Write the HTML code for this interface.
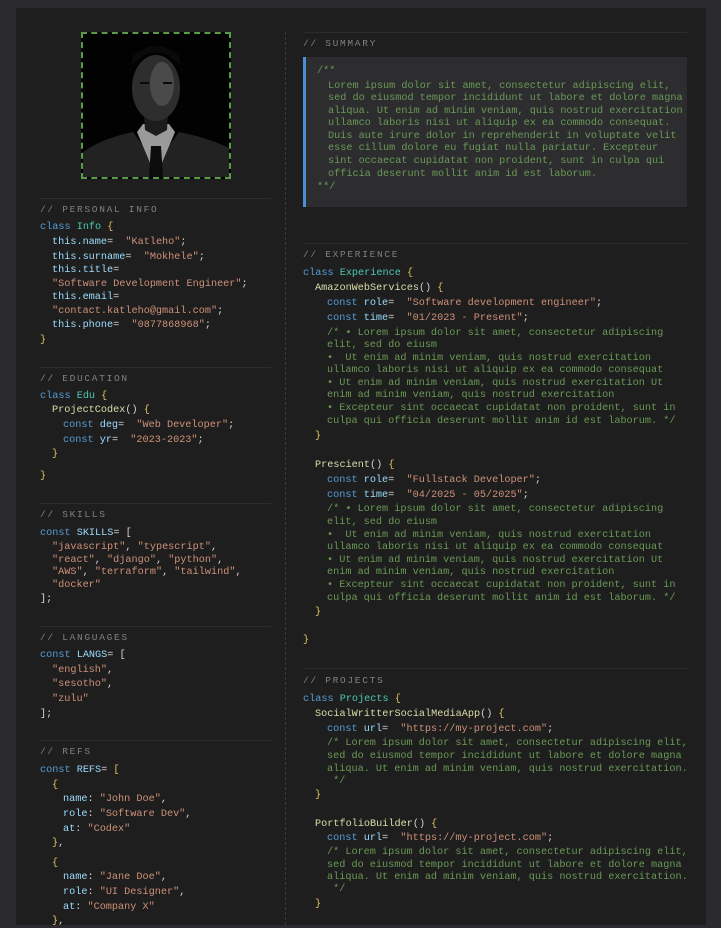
<!DOCTYPE html>
<html><head><meta charset="utf-8"><style>
html,body{margin:0;padding:0;}
body{width:721px;height:925px;background:#2b2b2f;position:relative;overflow:hidden;font-family:"Liberation Mono","Courier New",monospace;font-size:10.2px;}
.panel{position:absolute;left:16px;top:8px;width:690px;height:917px;background:#1e1e1e;}
.l{position:absolute;white-space:pre;line-height:12px;height:12px;color:#d4d4d4;}
.h{position:absolute;white-space:pre;line-height:12px;color:#808080;font-size:9.5px;letter-spacing:1.7px;}
.hr{position:absolute;height:1px;background:#2c2c2c;}
.k{color:#569cd6}.c{color:#4ec9b0}.p{color:#9cdcfe}.s{color:#ce9178}.g{color:#6a9955}.f{color:#dcdcaa}.b{color:#e0c060}.w{color:#d4d4d4}
</style></head><body>
<div class="panel"></div>
<div style="position:absolute;left:285px;top:32px;width:0;height:893px;border-left:1px dashed #3a3a3a;"></div>

<div style="position:absolute;left:81px;top:32px;width:146px;height:143px;border:2px dashed #5a9a48;background:#000;overflow:hidden;">
<svg width="146" height="143" viewBox="0 0 146 143">
<rect width="146" height="143" fill="#020202"/>
<path d="M0 143 L0 118 Q20 104 50 98 L73 130 L96 98 Q126 104 146 114 L146 143Z" fill="#222"/>
<path d="M54 98 L73 143 L92 98 L86 90 L60 90Z" fill="#9a9a9a"/>
<path d="M68 112 L78 112 L80 143 L66 143Z" fill="#0c0c0c"/>
<path d="M60 62 L86 62 L84 96 L73 102 L62 96Z" fill="#1c1c1c"/>
<ellipse cx="73" cy="54" rx="24" ry="33" fill="#2e2e2e"/>
<ellipse cx="79" cy="50" rx="12" ry="22" fill="#4a4a4a"/>
<path d="M48 32 Q73 5 98 32 L96 22 Q73 2 50 22Z" fill="#0a0a0a"/>
<rect x="57" y="48" width="9" height="2" fill="#0a0a0a"/><rect x="80" y="48" width="9" height="2" fill="#0a0a0a"/>
</svg></div>

<div class="hr" style="left:40px;top:198px;width:231px"></div>
<div class="h" style="left:40px;top:204px">// PERSONAL INFO</div>
<div class="l" style="left:40px;top:222px"><span class="k">class</span> <span class="c">Info</span> <span class="b">{</span></div>
<div class="l" style="left:52px;top:237px"><span class="p">this.name</span>=  <span class="s">"Katleho"</span>;</div>
<div class="l" style="left:52px;top:252px"><span class="p">this.surname</span>=  <span class="s">"Mokhele"</span>;</div>
<div class="l" style="left:52px;top:265px"><span class="p">this.title</span>=</div>
<div class="l" style="left:52px;top:279px"><span class="s">"Software Development Engineer"</span>;</div>
<div class="l" style="left:52px;top:292px"><span class="p">this.email</span>=</div>
<div class="l" style="left:52px;top:306px"><span class="s">"contact.katleho@gmail.com"</span>;</div>
<div class="l" style="left:52px;top:320px"><span class="p">this.phone</span>=  <span class="s">"0877868968"</span>;</div>
<div class="l" style="left:40px;top:335px"><span class="b">}</span></div>

<div class="hr" style="left:40px;top:367px;width:231px"></div>
<div class="h" style="left:40px;top:373px">// EDUCATION</div>
<div class="l" style="left:40px;top:391px"><span class="k">class</span> <span class="c">Edu</span> <span class="b">{</span></div>
<div class="l" style="left:52px;top:405px"><span class="f">ProjectCodex</span>() <span class="b">{</span></div>
<div class="l" style="left:63px;top:420px"><span class="k">const</span> <span class="p">deg</span>=  <span class="s">"Web Developer"</span>;</div>
<div class="l" style="left:63px;top:435px"><span class="k">const</span> <span class="p">yr</span>=  <span class="s">"2023-2023"</span>;</div>
<div class="l" style="left:52px;top:449px"><span class="b">}</span></div>
<div class="l" style="left:40px;top:471px"><span class="b">}</span></div>

<div class="hr" style="left:40px;top:503px;width:231px"></div>
<div class="h" style="left:40px;top:509px">// SKILLS</div>
<div class="l" style="left:40px;top:528px"><span class="k">const</span> <span class="p">SKILLS</span>= [</div>
<div class="l" style="left:52px;top:542px"><span class="s">"javascript"</span>, <span class="s">"typescript"</span>,</div>
<div class="l" style="left:52px;top:555px"><span class="s">"react"</span>, <span class="s">"django"</span>, <span class="s">"python"</span>,</div>
<div class="l" style="left:52px;top:567px"><span class="s">"AWS"</span>, <span class="s">"terraform"</span>, <span class="s">"tailwind"</span>,</div>
<div class="l" style="left:52px;top:580px"><span class="s">"docker"</span></div>
<div class="l" style="left:40px;top:594px">];</div>

<div class="hr" style="left:40px;top:626px;width:231px"></div>
<div class="h" style="left:40px;top:632px">// LANGUAGES</div>
<div class="l" style="left:40px;top:650px"><span class="k">const</span> <span class="p">LANGS</span>= [</div>
<div class="l" style="left:52px;top:665px"><span class="s">"english"</span>,</div>
<div class="l" style="left:52px;top:679px"><span class="s">"sesotho"</span>,</div>
<div class="l" style="left:52px;top:694px"><span class="s">"zulu"</span></div>
<div class="l" style="left:40px;top:709px">];</div>

<div class="hr" style="left:40px;top:740px;width:231px"></div>
<div class="h" style="left:40px;top:746px">// REFS</div>
<div class="l" style="left:40px;top:765px"><span class="k">const</span> <span class="p">REFS</span>= <span class="b">[</span></div>
<div class="l" style="left:52px;top:780px"><span class="b">{</span></div>
<div class="l" style="left:63px;top:794px"><span class="p">name</span>: <span class="s">"John Doe"</span>,</div>
<div class="l" style="left:63px;top:809px"><span class="p">role</span>: <span class="s">"Software Dev"</span>,</div>
<div class="l" style="left:63px;top:824px"><span class="p">at</span>: <span class="s">"Codex"</span></div>
<div class="l" style="left:52px;top:838px"><span class="b">}</span>,</div>
<div class="l" style="left:52px;top:858px"><span class="b">{</span></div>
<div class="l" style="left:63px;top:872px"><span class="p">name</span>: <span class="s">"Jane Doe"</span>,</div>
<div class="l" style="left:63px;top:887px"><span class="p">role</span>: <span class="s">"UI Designer"</span>,</div>
<div class="l" style="left:63px;top:902px"><span class="p">at</span>: <span class="s">"Company X"</span></div>
<div class="l" style="left:52px;top:916px"><span class="b">}</span>,</div>

<div class="hr" style="left:303px;top:32px;width:384px"></div>
<div class="h" style="left:303px;top:38px">// SUMMARY</div>
<div style="position:absolute;left:303px;top:57px;width:384px;height:150px;background:#2d2d30;border-left:3px solid #4a8fd4;box-sizing:border-box;"></div>
<div class="l g" style="left:317px;top:66px">/**</div>
<div class="l g" style="left:328px;top:81px">Lorem ipsum dolor sit amet, consectetur adipiscing elit,</div>
<div class="l g" style="left:328px;top:93px">sed do eiusmod tempor incididunt ut labore et dolore magna</div>
<div class="l g" style="left:328px;top:106px">aliqua. Ut enim ad minim veniam, quis nostrud exercitation</div>
<div class="l g" style="left:328px;top:118px">ullamco laboris nisi ut aliquip ex ea commodo consequat.</div>
<div class="l g" style="left:328px;top:131px">Duis aute irure dolor in reprehenderit in voluptate velit</div>
<div class="l g" style="left:328px;top:143px">esse cillum dolore eu fugiat nulla pariatur. Excepteur</div>
<div class="l g" style="left:328px;top:156px">sint occaecat cupidatat non proident, sunt in culpa qui</div>
<div class="l g" style="left:328px;top:169px">officia deserunt mollit anim id est laborum.</div>
<div class="l g" style="left:317px;top:182px">**/</div>

<div class="hr" style="left:303px;top:243px;width:384px"></div>
<div class="h" style="left:303px;top:249px">// EXPERIENCE</div>
<div class="l" style="left:303px;top:268px"><span class="k">class</span> <span class="c">Experience</span> <span class="b">{</span></div>
<div class="l" style="left:315px;top:283px"><span class="f">AmazonWebServices</span>() <span class="b">{</span></div>
<div class="l" style="left:327px;top:298px"><span class="k">const</span> <span class="p">role</span>=  <span class="s">"Software development engineer"</span>;</div>
<div class="l" style="left:327px;top:313px"><span class="k">const</span> <span class="p">time</span>=  <span class="s">"01/2023 - Present"</span>;</div>
<div class="l g" style="left:327px;top:328px">/* • Lorem ipsum dolor sit amet, consectetur adipiscing</div>
<div class="l g" style="left:327px;top:340px">elit, sed do eiusm</div>
<div class="l g" style="left:327px;top:353px">•  Ut enim ad minim veniam, quis nostrud exercitation</div>
<div class="l g" style="left:327px;top:365px">ullamco laboris nisi ut aliquip ex ea commodo consequat</div>
<div class="l g" style="left:327px;top:378px">• Ut enim ad minim veniam, quis nostrud exercitation Ut</div>
<div class="l g" style="left:327px;top:390px">enim ad minim veniam, quis nostrud exercitation</div>
<div class="l g" style="left:327px;top:403px">• Excepteur sint occaecat cupidatat non proident, sunt in</div>
<div class="l g" style="left:327px;top:416px">culpa qui officia deserunt mollit anim id est laborum. */</div>
<div class="l" style="left:315px;top:431px"><span class="b">}</span></div>
<div class="l" style="left:315px;top:460px"><span class="f">Prescient</span>() <span class="b">{</span></div>
<div class="l" style="left:327px;top:475px"><span class="k">const</span> <span class="p">role</span>=  <span class="s">"Fullstack Developer"</span>;</div>
<div class="l" style="left:327px;top:490px"><span class="k">const</span> <span class="p">time</span>=  <span class="s">"04/2025 - 05/2025"</span>;</div>
<div class="l g" style="left:327px;top:504px">/* • Lorem ipsum dolor sit amet, consectetur adipiscing</div>
<div class="l g" style="left:327px;top:517px">elit, sed do eiusm</div>
<div class="l g" style="left:327px;top:530px">•  Ut enim ad minim veniam, quis nostrud exercitation</div>
<div class="l g" style="left:327px;top:542px">ullamco laboris nisi ut aliquip ex ea commodo consequat</div>
<div class="l g" style="left:327px;top:555px">• Ut enim ad minim veniam, quis nostrud exercitation Ut</div>
<div class="l g" style="left:327px;top:567px">enim ad minim veniam, quis nostrud exercitation</div>
<div class="l g" style="left:327px;top:580px">• Excepteur sint occaecat cupidatat non proident, sunt in</div>
<div class="l g" style="left:327px;top:593px">culpa qui officia deserunt mollit anim id est laborum. */</div>
<div class="l" style="left:315px;top:607px"><span class="b">}</span></div>
<div class="l" style="left:303px;top:635px"><span class="b">}</span></div>

<div class="hr" style="left:303px;top:668px;width:384px"></div>
<div class="h" style="left:303px;top:675px">// PROJECTS</div>
<div class="l" style="left:303px;top:694px"><span class="k">class</span> <span class="c">Projects</span> <span class="b">{</span></div>
<div class="l" style="left:315px;top:709px"><span class="f">SocialWritterSocialMediaApp</span>() <span class="b">{</span></div>
<div class="l" style="left:327px;top:724px"><span class="k">const</span> <span class="p">url</span>=  <span class="s">"https://my-project.com"</span>;</div>
<div class="l g" style="left:327px;top:738px">/* Lorem ipsum dolor sit amet, consectetur adipiscing elit,</div>
<div class="l g" style="left:327px;top:751px">sed do eiusmod tempor incididunt ut labore et dolore magna</div>
<div class="l g" style="left:327px;top:764px">aliqua. Ut enim ad minim veniam, quis nostrud exercitation.</div>
<div class="l g" style="left:327px;top:776px"> */</div>
<div class="l" style="left:315px;top:790px"><span class="b">}</span></div>
<div class="l" style="left:315px;top:819px"><span class="f">PortfolioBuilder</span>() <span class="b">{</span></div>
<div class="l" style="left:327px;top:833px"><span class="k">const</span> <span class="p">url</span>=  <span class="s">"https://my-project.com"</span>;</div>
<div class="l g" style="left:327px;top:847px">/* Lorem ipsum dolor sit amet, consectetur adipiscing elit,</div>
<div class="l g" style="left:327px;top:860px">sed do eiusmod tempor incididunt ut labore et dolore magna</div>
<div class="l g" style="left:327px;top:872px">aliqua. Ut enim ad minim veniam, quis nostrud exercitation.</div>
<div class="l g" style="left:327px;top:884px"> */</div>
<div class="l" style="left:315px;top:899px"><span class="b">}</span></div>
</body></html>
